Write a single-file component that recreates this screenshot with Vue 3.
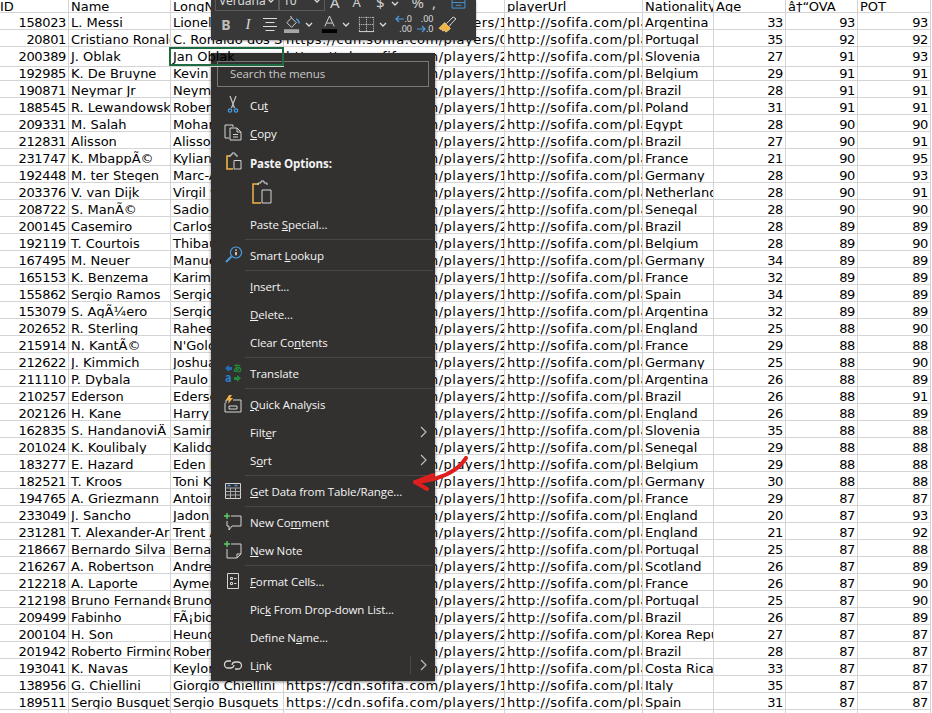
<script setup>
const head = ['ID', 'Name', 'LongName', 'photoUrl', 'playerUrl', 'Nationality', 'Age', 'â†“OVA', 'POT']

const raw = `158023|L. Messi|Lionel Messi|Argentina|33|93|93
20801|Cristiano Ronaldo|C. Ronaldo dos Santos Aveiro|Portugal|35|92|92
200389|J. Oblak|Jan Oblak|Slovenia|27|91|93
192985|K. De Bruyne|Kevin De Bruyne|Belgium|29|91|91
190871|Neymar Jr|Neymar da Silva Santos Jr.|Brazil|28|91|91
188545|R. Lewandowski|Robert Lewandowski|Poland|31|91|91
209331|M. Salah|Mohamed Salah|Egypt|28|90|90
212831|Alisson|Alisson Ramses Becker|Brazil|27|90|91
231747|K. MbappÃ©|Kylian MbappÃ©|France|21|90|95
192448|M. ter Stegen|Marc-AndrÃ© ter Stegen|Germany|28|90|93
203376|V. van Dijk|Virgil van Dijk|Netherlands|28|90|91
208722|S. ManÃ©|Sadio ManÃ©|Senegal|28|90|90
200145|Casemiro|Carlos Casimiro|Brazil|28|89|89
192119|T. Courtois|Thibaut Courtois|Belgium|28|89|90
167495|M. Neuer|Manuel Neuer|Germany|34|89|89
165153|K. Benzema|Karim Benzema|France|32|89|89
155862|Sergio Ramos|Sergio Ramos|Spain|34|89|89
153079|S. AgÃ¼ero|Sergio AgÃ¼ero|Argentina|32|89|89
202652|R. Sterling|Raheem Sterling|England|25|88|90
215914|N. KantÃ©|N'Golo KantÃ©|France|29|88|88
212622|J. Kimmich|Joshua Kimmich|Germany|25|88|90
211110|P. Dybala|Paulo Dybala|Argentina|26|88|89
210257|Ederson|Ederson|Brazil|26|88|91
202126|H. Kane|Harry Kane|England|26|88|89
162835|S. HandanoviÄ|Samir HandanoviÄ|Slovenia|35|88|88
201024|K. Koulibaly|Kalidou Koulibaly|Senegal|29|88|88
183277|E. Hazard|Eden Hazard|Belgium|29|88|88
182521|T. Kroos|Toni Kroos|Germany|30|88|88
194765|A. Griezmann|Antoine Griezmann|France|29|87|87
233049|J. Sancho|Jadon Sancho|England|20|87|93
231281|T. Alexander-Arnold|Trent Alexander-Arnold|England|21|87|92
218667|Bernardo Silva|Bernardo Silva|Portugal|25|87|88
216267|A. Robertson|Andrew Robertson|Scotland|26|87|89
212218|A. Laporte|Aymeric Laporte|France|26|87|90
212198|Bruno Fernandes|Bruno Fernandes|Portugal|25|87|90
209499|Fabinho|FÃ¡bio Henrique Tavares|Brazil|26|87|89
200104|H. Son|Heung Min Son|Korea Republic|27|87|87
201942|Roberto Firmino|Roberto Firmino|Brazil|28|87|87
193041|K. Navas|Keylor Navas|Costa Rica|33|87|87
138956|G. Chiellini|Giorgio Chiellini|Italy|35|87|87
189511|Sergio Busquets|Sergio Busquets|Spain|31|87|87`

const rows = raw.split('\n').map((line) => {
  const [id, name, long, nation, age, ova, pot] = line.split('|')
  const p = id.padStart(6, '0')
  return {
    id, name, long, nation, age, ova, pot,
    photo: `https://cdn.sofifa.com/players/${p.slice(0, 3)}/${p.slice(3)}/21_120.png`,
    url: `http://sofifa.com/player/${id}/`,
  }
})

const G = '#d6d6d6'
const B = '#4a9be0'
const O = '#f2b443'
const icons = {
  cut: [
    { d: 'M7 1l4.500 12M13 1L8.500 13', s: '#c4c4c4', w: 1.2 },
    { d: 'M7 13.800a1.700 1.700 0 1 0 .01 0M13 13.800a1.700 1.700 0 1 0 .01 0', s: B, w: 1.2 },
  ],
  copy: [
    { d: 'M6 15H2V2h8v2', s: G },
    { d: 'M7 5h7l4 4v8H7zM14 5v4h4M10 11.500h5M10 14h5', s: G },
  ],
  paste: [
    { d: 'M7 4H4v13h6', s: O, w: 1.6 },
    { d: 'M7 5V3h2V1h3v2h2v2', s: G },
    { d: 'M11 8.500h7v8.500h-7z', s: G },
  ],
  lookup: [
    { d: 'M8.500 11.500L3 17', s: B, w: 2 },
    { d: 'M13 2a5.500 5.500 0 1 0 .01 0', s: B, w: 1.2 },
    { d: 'M13 4.500v1.300M13 7v3.300', s: '#fff', w: 1.4 },
  ],
  translate: [
    { d: 'M2 5l4-3v2h3v3H6v2z', f: '#1f6fb8' },
    { d: 'M18 15l-4-3v2h-3v3h3v2z', f: '#1f8a3a' },
    { t: 'a', x: 2, y: 19, size: 11, c: '#2a82d0' },
    { t: 'あ', x: 10, y: 9, size: 9, c: '#1f8a3a' },
  ],
  quick: [
    { d: 'M3 9V6h4M10 6h8v12H2V9', s: G },
    { d: 'M6 12h8v3H6z', s: G },
    { d: 'M6 1L3 6h3l-1 4 5-6H7l2-3z', f: O },
  ],
  table: [
    { d: 'M2.500 2.500h15v15h-15z', s: G },
    { d: 'M2.500 7h15M2.500 10.500h15M2.500 14h15M7.500 7v10.500M12.500 7v10.500', s: '#a8a8a8' },
    { d: 'M4.500 4.500h3M11.500 4.500h3', s: B, w: 1.6 },
  ],
  comment: [
    { d: 'M8 4h10v10H9l-3 4v-4H4V9', s: G },
    { d: 'M4 1v6M1 4h6', s: '#5fce6c', w: 1.4 },
  ],
  note: [
    { d: 'M8 4h10v10l-4 4H4V9', s: G },
    { d: 'M14 18v-4h4', s: G },
    { d: 'M4 1v6M1 4h6', s: '#5fce6c', w: 1.4 },
  ],
  format: [
    { d: 'M4.500 2.500h11v15h-11z', s: G },
    { d: 'M7.500 6.500h2v2h-2zM7.500 11.500h2v2h-2z', s: G },
    { d: 'M11 7.500h2.500M11 12.500h2.500', s: G },
  ],
  link: [
    { d: 'M8 6H5a3.500 3.500 0 0 0 0 7h3a3.500 3.500 0 0 0 3-3', s: G, w: 1.3 },
    { d: 'M12 14h3a3.500 3.500 0 0 0 0-7h-3a3.500 3.500 0 0 0-3 3', s: G, w: 1.3 },
  ],
}

// label is [before, access key, after]
const groups = [
  [
    { icon: 'cut', label: ['Cu', 't', ''] },
    { icon: 'copy', label: ['', 'C', 'opy'] },
    { icon: 'paste', label: ['Paste Options:', '', ''], bold: true },
    { pasteRow: true },
    { label: ['Paste ', 'S', 'pecial...'] },
  ],
  [{ icon: 'lookup', label: ['Smart ', 'L', 'ookup'] }],
  [
    { label: ['', 'I', 'nsert...'] },
    { label: ['', 'D', 'elete...'] },
    { label: ['Clear Co', 'n', 'tents'] },
  ],
  [{ icon: 'translate', label: ['Translate', '', ''] }],
  [
    { icon: 'quick', label: ['', 'Q', 'uick Analysis'] },
    { label: ['Filt', 'e', 'r'], more: true },
    { label: ['S', 'o', 'rt'], more: true },
  ],
  [{ icon: 'table', label: ['', 'G', 'et Data from Table/Range...'] }],
  [
    { icon: 'comment', label: ['New Co', 'm', 'ment'] },
    { icon: 'note', label: ['', 'N', 'ew Note'] },
  ],
  [
    { icon: 'format', label: ['', 'F', 'ormat Cells...'] },
    { label: ['Pic', 'k', ' From Drop-down List...'] },
    { label: ['Define N', 'a', 'me...'] },
    { icon: 'link', label: ['L', 'i', 'nk'], more: true, split: true },
  ],
]
</script>

<template>
  <div class="page">
    <div class="sheet">
      <div class="row head">
        <div v-for="h in head" :key="h" class="cell">{{ h }}</div>
      </div>
      <div v-for="r in rows" :key="r.id" class="row">
        <div class="cell num">{{ r.id }}</div>
        <div class="cell">{{ r.name }}</div>
        <div class="cell" :class="{ selected: r.id === '200389' }">{{ r.long }}</div>
        <div class="cell link-cell">{{ r.photo }}</div>
        <div class="cell link-cell">{{ r.url }}</div>
        <div class="cell">{{ r.nation }}</div>
        <div class="cell num">{{ r.age }}</div>
        <div class="cell num">{{ r.ova }}</div>
        <div class="cell num">{{ r.pot }}</div>
      </div>
      <div class="row">
        <div v-for="h in head" :key="h" class="cell"></div>
      </div>
    </div>

    <div class="mini-bar">
      <div class="bar-top">
        <div class="combo font-box">Verdana<svg class="chev" viewBox="0 0 8 5"><path d="M1 1l3 3 3-3" /></svg></div>
        <div class="combo size-box">10<svg class="chev" viewBox="0 0 8 5"><path d="M1 1l3 3 3-3" /></svg></div>
        <span class="top-glyph a1">A</span>
        <span class="top-glyph a2">A</span>
        <span class="top-glyph d1">$</span>
        <svg class="chev c0" viewBox="0 0 8 5"><path d="M1 1l3 3 3-3" /></svg>
        <span class="top-glyph p1">%</span>
        <span class="top-glyph p2">,</span>
        <svg class="merge" viewBox="0 0 16 12"><path d="M1 0v11h14V0M1 5h14M5 8h6" /></svg>
      </div>
      <div class="bar-bottom">
        <span class="tool bold">B</span>
        <span class="tool ital">I</span>
        <svg class="tool-svg lines" viewBox="0 0 16 16"><path d="M1 2.500h14M3.500 6.500h9M1 10.500h14M3.500 14.500h9" /></svg>
        <svg class="tool-svg wide fill-ico" viewBox="0 0 18 20">
          <path d="M3 8l5-5 5 5-5 5z M8 3l-1-2" />
          <path d="M13 4c2 1 3 3 3 5" class="blue" />
          <rect x="0" y="15" width="16" height="4" class="gray-fill" />
        </svg>
        <svg class="chev c1" viewBox="0 0 8 5"><path d="M1 1l3 3 3-3" /></svg>
        <svg class="tool-svg wide font-ico" viewBox="0 0 18 20">
          <path d="M4 12L9 1l5 11M6 8.500h6" />
          <rect x="1" y="15" width="16" height="4" class="black-fill" />
        </svg>
        <svg class="chev c2" viewBox="0 0 8 5"><path d="M1 1l3 3 3-3" /></svg>
        <svg class="tool-svg wide border-ico" viewBox="0 0 18 18">
          <path d="M1 1.500h16M1 9h16M9 1v15M1.500 1v15M16.500 1v15" stroke-dasharray="1 1" />
          <path d="M1 16.500h16" />
        </svg>
        <svg class="chev c3" viewBox="0 0 8 5"><path d="M1 1l3 3 3-3" /></svg>
        <div class="decimal d-less">
          <div><svg viewBox="0 0 9 8"><path d="M9 4H1M4 1L1 4l3 3" /></svg>.0</div>
          <div>.00</div>
        </div>
        <div class="decimal d-more">
          <div>.00</div>
          <div><svg viewBox="0 0 9 8"><path d="M0 4h8M5 1l3 3-3 3" /></svg>.0</div>
        </div>
        <svg class="brush" viewBox="0 0 20 18">
          <path d="M1 13l6-6 6 6c-1 2-3 3-5 4l-1-2-2 1-1-2-2 0z" fill="#f2b443" stroke="#f5d998" stroke-width=".8" />
          <path d="M9 8l2-2 5-5 3 2-5 5-2 3" fill="none" stroke="#e8e8e8" />
        </svg>
      </div>
    </div>

    <div class="menu">
      <div class="search">Search the menus</div>
      <div v-for="(group, gi) in groups" :key="gi" class="group">
        <template v-for="(item, ii) in group" :key="ii">
          <div v-if="item.pasteRow" class="paste-row">
            <svg class="paste-big" viewBox="0 0 20 24">
              <path d="M7 4H1v19h8" fill="none" stroke="#f2b443" stroke-width="1.500" />
              <path d="M6 5V3h3V1h3v2h3v2" fill="none" stroke="#d6d6d6" />
              <path d="M10 10h9v13h-9z" fill="none" stroke="#d6d6d6" />
            </svg>
          </div>
          <div v-else class="item" :class="{ strong: item.bold }">
            <span class="ico">
              <svg v-if="item.icon" viewBox="0 0 20 20">
                <template v-for="(p, pi) in icons[item.icon]" :key="pi">
                  <text v-if="p.t" :x="p.x" :y="p.y" :font-size="p.size" :fill="p.c" font-weight="700" font-family="'Noto Sans CJK JP', sans-serif">{{ p.t }}</text>
                  <path
                    v-else
                    :d="p.d"
                    :fill="p.f || 'none'"
                    :stroke="p.s || 'none'"
                    :stroke-width="p.w || 1"
                  />
                </template>
              </svg>
            </span>
            <span class="txt">{{ item.label[0] }}<u>{{ item.label[1] }}</u>{{ item.label[2] }}</span>
            <span v-if="item.more" class="more" :class="{ split: item.split }">
              <svg viewBox="0 0 7 12"><path d="M1 1l5 5-5 5" /></svg>
            </span>
          </div>
        </template>
      </div>
    </div>

    <svg class="arrow" viewBox="0 0 70 40" width="70" height="40">
      <path d="M61 2C55 12 45 18 32 22 24 24 18 26 10 26" fill="none" stroke="#dd1f1d" stroke-width="4" stroke-linecap="round" />
      <path d="M28 19L10 26l12 7" fill="none" stroke="#dd1f1d" stroke-width="4" stroke-linecap="round" stroke-linejoin="round" />
    </svg>
  </div>
</template>

<style>
html, body {
  margin: 0;
  background: #fff;
}
</style>

<style scoped>
.page {
  position: relative;
  width: 932px;
  height: 713px;
  overflow: hidden;
  font-family: "DejaVu Sans", sans-serif;
  font-size: 13px;
  color: #000;
}

.row {
  display: grid;
  grid-template-columns: 69px 102px 113px 221px 138px 71px 72px 72px 73px 1px;
  height: 17px;
}

.row.head {
  height: 13px;
}

.cell {
  position: relative;
  box-sizing: border-box;
  padding: 0 2px;
  line-height: 19px;
  white-space: nowrap;
  overflow: hidden;
  border-right: 1px solid #d4d4d4;
  border-bottom: 1px solid #d4d4d4;
}

.head .cell {
  line-height: 13px;
}

.head .cell:first-child {
  padding-left: 0;
}

.num {
  text-align: right;
  letter-spacing: -0.35px;
}

.link-cell {
  letter-spacing: 0.5px;
}

.selected {
  overflow: visible;
  z-index: 1;
}

.selected::after {
  content: "";
  position: absolute;
  left: -2px;
  top: 0;
  width: 115px;
  height: 19px;
  box-sizing: border-box;
  border: 2px solid #1e6b41;
}

.mini-bar {
  position: absolute;
  left: 211px;
  top: 0;
  width: 265px;
  height: 40px;
  box-sizing: border-box;
  background: #383838;
  box-shadow: 0 1px 2px rgba(0, 0, 0, 0.4);
  color: #d8d8d8;
  font-family: "Noto Sans", sans-serif;
  overflow: hidden;
}

.bar-top {
  display: flex;
  align-items: flex-end;
  height: 11px;
  padding-left: 4px;
}

.combo {
  display: flex;
  justify-content: space-between;
  align-items: center;
  flex: none;
  height: 18px;
  margin-top: -7px;
  box-sizing: border-box;
  border: 1px solid #5a5a5a;
  padding: 0 3px 3px 3px;
  font-size: 12px;
  line-height: 12px;
}

.font-box {
  width: 64px;
}

.size-box {
  width: 46px;
}

.top-glyph {
  line-height: 11px;
  font-size: 15px;
  margin-bottom: 3px;
  color: #d0d0d0;
}

.a1 {
  margin-left: 5px;
}

.a2 {
  margin-left: 13px;
  font-size: 13px;
}

.d1 {
  margin-left: 15px;
}

.c0 {
  margin: 0 0 5px 6px;
}

.p1 {
  margin-left: 13px;
}

.p2 {
  margin-left: 8px;
}

.merge {
  width: 15px;
  height: 11px;
  margin: 0 0 2px 15px;
  fill: none;
  stroke: #4a9be0;
}

.bar-bottom {
  display: flex;
  align-items: center;
  height: 26px;
  padding-left: 9px;
}

.tool {
  flex: none;
  text-align: center;
  font-size: 14px;
}

.bold {
  width: 12px;
  font-weight: 700;
  color: #bdbdbd;
}

.ital {
  width: 8px;
  margin-left: 12px;
  font-style: italic;
  font-family: "Liberation Serif", serif;
  font-size: 15px;
}

.tool-svg {
  flex: none;
  width: 16px;
  height: 16px;
  fill: none;
  stroke: #dcdcdc;
  stroke-width: 1;
}

.lines {
  margin-left: 10px;
}

.tool-svg.wide {
  height: 19px;
  width: 17px;
}

.fill-ico {
  margin-left: 5.5px;
}

.font-ico {
  margin-left: 7.5px;
}

.border-ico {
  margin-left: 8px;
}

.tool-svg .blue {
  stroke: #4a9be0;
  stroke-width: 1.5;
}

.tool-svg .gray-fill {
  fill: #a6a6a6;
  stroke: none;
}

.tool-svg .black-fill {
  fill: #000;
  stroke: none;
}

.chev {
  width: 8px;
  height: 5px;
  flex: none;
  fill: none;
  stroke: #dcdcdc;
  stroke-width: 1.3;
}

.c1,
.c2 {
  margin-left: 4.5px;
}

.c3 {
  margin-left: 4px;
}

.decimal {
  flex: none;
  width: 19px;
  font-size: 9px;
  line-height: 10px;
  text-align: right;
  color: #dcdcdc;
}

.d-less {
  margin-left: 6px;
}

.d-more {
  margin-left: 2.5px;
}

.decimal div {
  display: flex;
  justify-content: flex-end;
  align-items: center;
}

.decimal svg {
  width: 9px;
  height: 8px;
  flex: none;
  fill: none;
  stroke: #4a9be0;
  stroke-width: 1.2;
}

.brush {
  flex: none;
  width: 19px;
  height: 17px;
  margin-left: 4px;
}

.menu {
  position: absolute;
  left: 211px;
  top: 53px;
  width: 224px;
  height: 628px;
  box-sizing: border-box;
  padding: 8px 0 0 0;
  background: #323130;
  box-shadow: 0 1px 3px rgba(0, 0, 0, 0.5);
  font-family: "Open Sans", sans-serif;
  font-size: 11.500px;
  letter-spacing: -0.1px;
  color: #f4f4f4;
}

.search {
  box-sizing: border-box;
  height: 26px;
  margin: 0 6px;
  padding-left: 12px;
  border: 1px solid #777;
  line-height: 24px;
  color: #c8c8c8;
}

.group {
  border-bottom: 1px solid #484746;
  margin-left: 34px;
  margin-right: 2px;
  padding-bottom: 1px;
  margin-bottom: 1px;
}

.group:nth-of-type(2) {
  padding-top: 4px;
}

.group:last-child {
  border-bottom: none;
}

.item {
  display: flex;
  align-items: center;
  height: 28px;
  position: relative;
  padding-left: 5px;
}

.strong {
  font-weight: 700;
  height: 30px;
  padding-top: 2px;
  box-sizing: border-box;
}

.ico {
  position: absolute;
  left: -22px;
  top: 50%;
  width: 20px;
  height: 20px;
  margin-top: -10px;
}

.ico svg {
  display: block;
  width: 20px;
  height: 20px;
}

.more {
  position: absolute;
  right: 6px;
  top: 8px;
  width: 7px;
  height: 12px;
}

.more.split {
  border-left: 1px solid #4a4948;
  padding-left: 9px;
  top: 5px;
  height: 18px;
  display: flex;
  align-items: center;
}

.more svg {
  display: block;
  width: 7px;
  height: 12px;
  fill: none;
  stroke: #bdbdbd;
  stroke-width: 1.200;
}

.paste-row {
  box-sizing: border-box;
  height: 33px;
  padding: 3px 0 0 7px;
}

.paste-big {
  display: block;
  width: 20px;
  height: 24px;
}

.arrow {
  position: absolute;
  left: 405px;
  top: 456px;
}
</style>
